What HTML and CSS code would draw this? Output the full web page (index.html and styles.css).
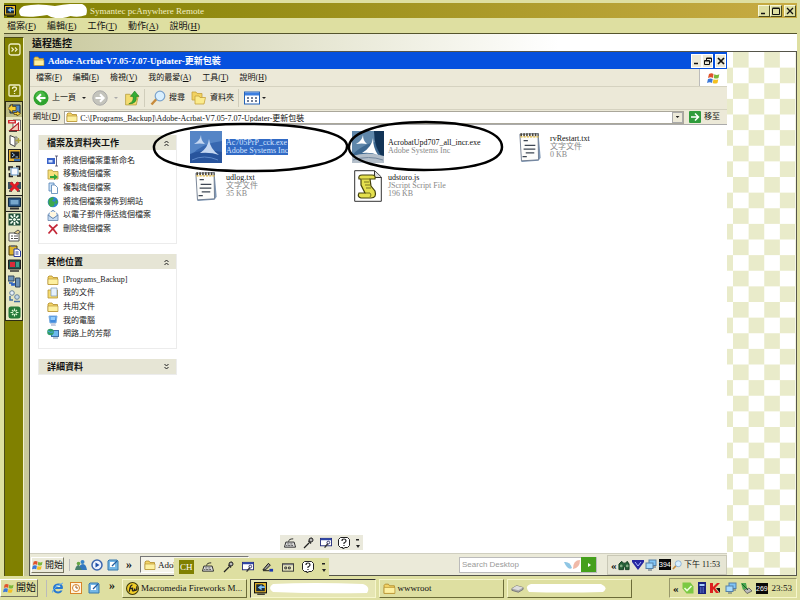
FILE: index.html
```html
<!DOCTYPE html>
<html lang="en">
<head>
<meta charset="utf-8">
<title>Symantec pcAnywhere Remote</title>
<link rel="stylesheet" href="styles.css">
</head>
<body>
<svg class="defs" aria-hidden="true">
  <symbol id="pca" viewBox="0 0 12 12"><rect x=".5" y=".5" width="11" height="9.500" fill="#f0bd28" stroke="#111"/><path d="M2 2h6l2 2v4.500H2z" fill="#1b2b3a"/><path d="M10 5.500H7V7.500L3.500 5 7 2.500v1.500h3z" fill="#7cc0f8"/><path d="M3 11.300h7" stroke="#111"/></symbol>
  <symbol id="folder" viewBox="0 0 12 12"><path d="M1 10.500V3l1-1h3l1 1.500h4.500v7z" fill="#f4d468" stroke="#b08a28" stroke-width=".8"/><path d="M1 10.500V5h10v5.500z" fill="#fdf0a0" stroke="#b08a28" stroke-width=".6"/></symbol>
  <symbol id="flag" viewBox="0 0 14 14"><path d="M2 3q2.500-1.500 4.500 0L6 7Q4 5.500 1 7z" fill="#e0532c"/><path d="M7.300 3.300q2.500 1.300 5 0L11.500 7q-2.500 1.200-4.700 0z" fill="#7cb83a"/><path d="M1 8q2.500-1.200 4.700 0L5 12Q3 10.500 0 12z" fill="#3c78d8"/><path d="M6.500 8.200q2.500 1.200 4.800 0L10.500 12q-2.500 1.200-4.800 0z" fill="#f4c020"/></symbol>
  <symbol id="back" viewBox="0 0 16 16"><circle cx="8" cy="8" r="7.500" fill="#2fa32f"/><circle cx="7.500" cy="6.500" r="5" fill="#5cc653" opacity=".6"/><path d="M12.500 8H4.500M8 4.200 4.300 8 8 11.800" fill="none" stroke="#fff" stroke-width="2"/></symbol>
  <symbol id="fwd" viewBox="0 0 16 16"><circle cx="8" cy="8" r="7.200" fill="#c4c4bc" stroke="#aaa"/><path d="M3.500 8h8M8 4.200 11.700 8 8 11.800" fill="none" stroke="#fff" stroke-width="2"/></symbol>
  <symbol id="up" viewBox="0 0 14 15"><path d="M1 14V4h4l1 1h7l-2 9z" fill="#f4dc70" stroke="#b29a3a" stroke-width=".7"/><path d="M4 13q5-2 4-7H5.500L9.500 1l4 5H11q1 7-7 7z" fill="#35ad35" stroke="#167316" stroke-width=".5"/></symbol>
  <symbol id="search" viewBox="0 0 16 16"><path d="m1.500 14.500 5-5.500" stroke="#c78b3c" stroke-width="2.500"/><circle cx="10" cy="6" r="4.800" fill="#d8efff" stroke="#7ba3cc" stroke-width="1.200"/></symbol>
  <symbol id="folders" viewBox="0 0 16 16"><path d="M1 10V2h4l1 1.500h5V10z" fill="#f2d260" stroke="#c5a13c" stroke-width=".8"/><path d="M4 14V6h4l1 1.500h5.500L13 14z" fill="#fbeb8c" stroke="#c5a13c" stroke-width=".8"/></symbol>
  <symbol id="views" viewBox="0 0 16 13"><rect x=".5" y=".5" width="15" height="12" fill="#fff" stroke="#2463b8"/><path d="M1 1h14v3H1z" fill="#3b7ee0"/><path d="M3 6.500h2m2 0h2m2 0h2M3 9.500h2m2 0h2m2 0h2" stroke="#457" stroke-width="1.500"/></symbol>
  <symbol id="go" viewBox="0 0 12 12"><rect width="12" height="12" rx="1" fill="#2f9c3c"/><path d="M2 6h7M6 2.500 9.500 6 6 9.500" fill="none" stroke="#fff" stroke-width="1.500"/></symbol>
  <symbol id="chev" viewBox="0 0 7 8"><path d="m1.500 4 2-2 2 2M1.500 7l2-2 2 2" fill="none" stroke="#222"/></symbol>
  <symbol id="rename" viewBox="0 0 12 12"><path d="M0 3h8v6H0z" fill="#3a63c8"/><path d="M1.500 5h4v2.500h-4z" fill="#cfe0ff"/><path d="M9.500 1v10M8 1h3M8 11h3" stroke="#446" stroke-width=".8"/></symbol>
  <symbol id="move" viewBox="0 0 12 12"><path d="M1 11V2h4l1 1.500h5V11z" fill="#f6e07c" stroke="#b59a38" stroke-width=".8"/><path d="M3 8h4V6l4 3-4 3v-2H3z" fill="#2fa53a"/></symbol>
  <symbol id="copy" viewBox="0 0 12 12"><path d="M2 1h5v8H2z" fill="#cfe4fa" stroke="#5282b4" stroke-width=".8"/><path d="M4.500 3H8l2.500 2.500v6h-6z" fill="#fff" stroke="#5282b4" stroke-width=".8"/></symbol>
  <symbol id="globe" viewBox="0 0 12 12"><circle cx="6" cy="6" r="5.300" fill="#3183d2"/><path d="M2 3q3-3 5-1L5 5l3 1-1 4-3 1Q0 8 2 3zM9 3l2 3-2 3-1-3z" fill="#3ca84b"/></symbol>
  <symbol id="mail" viewBox="0 0 12 12"><path d="M1 5.500 6 1l5 4.500v6H1z" fill="#c4dbf4" stroke="#6686ad" stroke-width=".8"/><path d="M3 3h6v4L6 9 3 7z" fill="#fff7df"/><path d="m1 6 5 3.500L11 6" fill="none" stroke="#6686ad"/></symbol>
  <symbol id="delete" viewBox="0 0 12 12"><path d="M2 2q4 3 8 9M10.500 1.500Q6 5 1.500 10.500" fill="none" stroke="#c42839" stroke-width="1.600"/></symbol>
  <symbol id="docs" viewBox="0 0 12 12"><path d="M1 11V3h9.500v8z" fill="#f6dc70" stroke="#b69536" stroke-width=".8"/><path d="M4 1h6v8H4z" fill="#e5f1fc" stroke="#7895b4" stroke-width=".7"/></symbol>
  <symbol id="pc" viewBox="0 0 12 12"><path d="M2 1h8l-1 7H3z" fill="#428cde" stroke="#7daee2"/><path d="M3.500 2h5L8 5H3.500z" fill="#92cbfb"/><path d="M4 8h4l1 3H4z" fill="#c5cde0"/></symbol>
  <symbol id="net" viewBox="0 0 12 12"><rect x="4.500" y="2.500" width="7" height="6" fill="#6cb9ee" stroke="#3d70a8"/><path d="M6 9h5v2H6z" fill="#b8c8d8"/><circle cx="3.500" cy="4" r="3.300" fill="#2f9b68"/><path d="M1 3q2 2 5 1" stroke="#46a9ef" fill="none"/></symbol>
  <symbol id="installer" viewBox="0 0 32 32"><path d="M0 0h32v32H0z" fill="#3767b0"/><path d="M0 0h32v10Q12 12 0 25z" fill="#5585c6"/><path d="M0 23Q14 17 32 21v11H0z" fill="#28549c"/><path d="M11 4q0 6 4 9-5-1-11 0 6-3 7-9zM19 8q1 10 10 16-8-3-19-2Q18 17 19 8z" fill="#c6d8f2"/><path d="M2 29q12-6 26 0" stroke="#5c87c8" fill="none"/></symbol>
  <symbol id="installer2" viewBox="0 0 32 32"><path d="M0 0h32v32H0z" fill="#3d6890"/><path d="M0 0h32v10Q14 10 0 24z" fill="#5f87aa"/><path d="M22 0h10v28Q22 18 22 0z" fill="#123457"/><path d="M0 25q16-5 32 0v7H0z" fill="#b4bfca"/><path d="M11 4q0 6 4 9-5-1-11 0 6-3 7-9zM21 7q0 10 5 17-7-3-16-2 10-6 11-15z" fill="#fff"/><path d="M1 29q16-5 30 0" stroke="#75899f" fill="none"/></symbol>
  <symbol id="text" viewBox="0 0 22 30"><path d="m2 3 17-1 2 23-2 3-16 1z" fill="#7e97b5"/><path d="m1.500 3 17-.5.500 24.500-16 1z" fill="#fdfdfb" stroke="#68758a" stroke-width=".8"/><path d="M2 3.500h17" stroke="#4b4538" stroke-width="3" stroke-dasharray="1.500 1.200"/><path d="M2 5.500h17" stroke="#e1b83c" stroke-width="1.300" stroke-dasharray="2 1"/><path d="M5 9h4M6 13.500h10M5 17h11M7 20.500h8M4 24h4" stroke="#3d4652" stroke-width="1.300"/></symbol>
  <symbol id="script" viewBox="0 0 28 32"><path d="M.700.700h20L27.300 7v24.300H.700z" fill="#fff" stroke="#333" stroke-width="1"/><path d="M20.500 1v6.500H27" fill="#ddd" stroke="#333"/><path d="M8 5h10q4 0 3 4h-5l1 7 4 5q2 7-4 7H7q-4-1-2-5h6L7 15V9H5q-1-4 3-4z" fill="#e4e04e" stroke="#44420c" stroke-width="1.200"/><path d="M8 9h8M10 12h5M11 15h5M12 18h5M11 23h5q2 2 0 4" stroke="#77731e" fill="none"/></symbol>
  <symbol id="keyb" viewBox="0 0 13 11"><path d="M2 4.500h9L12.500 10H.500z" fill="#eee" stroke="#222"/><path d="M3 6.500h7M2.500 8.300h8" stroke="#222" stroke-dasharray="1 .6"/><path d="M5 4q0-3 5-3" stroke="#222" fill="none"/></symbol>
  <symbol id="mic" viewBox="0 0 12 12"><path d="M10 1 7 4M6.500 4 9 6.500M7 6 2 11" stroke="#222" stroke-width="1.300"/><circle cx="9" cy="3" r="2" fill="#bbb" stroke="#222"/></symbol>
  <symbol id="tools" viewBox="0 0 13 12"><rect x=".5" y="1" width="12" height="8" fill="#fff" stroke="#252d7c"/><path d="M1 1h11v2H1z" fill="#2d45a7"/><path d="m5 11 4-5" stroke="#333" stroke-width="1.500"/><circle cx="9" cy="5.500" r="1.500" fill="#fff" stroke="#2b2b62"/></symbol>
  <symbol id="pen" viewBox="0 0 13 12"><path d="m1 9 6-7 2 2-5 5zM1 10h7" fill="#999" stroke="#111"/><path d="M8 8h4v3H8z" fill="#1c36b0"/></symbol>
  <symbol id="pad" viewBox="0 0 13 12"><rect x=".5" y="2.500" width="12" height="8" fill="#e8e8c0" stroke="#333"/><path d="M1 3h11v1H1z" fill="#667"/><path d="M3 6h2v2H3zm4 0h2v2H7z" fill="none" stroke="#333"/></symbol>
  <symbol id="help" viewBox="0 0 12 12"><path d="M2.500.500h7l2 2v6l-2 2H7L5 12v-1.500H2.500l-2-2v-6z" fill="#fff" stroke="#222"/><path d="M4 4q0-2 2-2t2 2q0 1-2 2v1m0 1v1" fill="none" stroke="#222" stroke-width="1.200"/></symbol>
  <symbol id="grip" viewBox="0 0 4 12"><path d="M0 2h3v1.500H0zM0 8h4L2 11z" fill="#222"/></symbol>
  <symbol id="ie" viewBox="0 0 12 12"><path d="M10 7H3q.5 2.500 3 2.500 1.500 0 2.500-1h2Q9 11.500 6 11.500 1 11 1 6.500T6 1.500t5 5z" fill="#2878d0"/><path d="M3.500 5h5q-.5-2-2.500-2T3.500 5z" fill="#e5f3d0"/><path d="M.500 10.500Q0 6 11 1" fill="none" stroke="#5faaf0"/></symbol>
  <symbol id="clock" viewBox="0 0 12 12"><rect x=".5" y=".5" width="11" height="11" fill="#fff4df" stroke="#d88328"/><circle cx="6" cy="6" r="3.500" fill="#fff" stroke="#d88328"/><path d="M6 3.500V6h2" stroke="#a55a12" fill="none"/></symbol>
  <symbol id="desktop" viewBox="0 0 12 12"><path d="M2 1h8l1 1v9H1V2z" fill="#74b7e6" stroke="#3778ac"/><path d="M3 3h5v5H3z" fill="#fff"/><path d="m5 7 5-5" stroke="#235b9b" stroke-width="1.200"/></symbol>
  <symbol id="msn" viewBox="0 0 12 12"><circle cx="7.500" cy="3" r="2" fill="#3583ca"/><path d="M4 11q0-6 4-6 3 0 4 6z" fill="#3277bd"/><circle cx="3.500" cy="4.500" r="1.800" fill="#67a744"/><path d="M0 11q1-5 4-5l3 5z" fill="#487f6d"/></symbol>
  <symbol id="media" viewBox="0 0 12 12"><circle cx="6" cy="6" r="5" fill="#eef4ff" stroke="#3c65ad" stroke-width="1.500"/><path d="m4.500 3.500 4 2.500-4 2.500z" fill="#1f4fa8"/></symbol>
  <symbol id="fw" viewBox="0 0 12 12"><circle cx="6" cy="6" r="5.500" fill="#f0ce27" stroke="#3d3908"/><path d="M3 9q1-7 3-6M3 6h3M6 5v3q2 1 2-2 0 3 2 1V4" fill="none" stroke="#222" stroke-width="1.200"/></symbol>
  <symbol id="drive" viewBox="0 0 14 12"><path d="M1 6 6 3l7 2v2L8 10 1 8z" fill="#aaa" stroke="#777"/><path d="m1 6 5-3 7 2-5 3z" fill="#ddd"/></symbol>
  <symbol id="binoc" viewBox="0 0 13 12"><path d="M1 5 4 2l2 2h2l2-2 2 3v6H8V8H6v3H1z" fill="#245f36" stroke="#123c21"/><circle cx="3.500" cy="7" r="1.500" fill="#80ac82"/><circle cx="10" cy="7" r="1.500" fill="#80ac82"/></symbol>
  <symbol id="vshield" viewBox="0 0 12 12"><path d="M0 1h12v2L6 11 0 3z" fill="#2525a0"/><path d="m3 3 3 4 3-4" fill="none" stroke="#a9b4ff"/></symbol>
  <symbol id="lan" viewBox="0 0 12 12"><rect x="4" y="1" width="7" height="5.500" fill="#7fc4f6" stroke="#5480a8"/><rect x="1" y="4" width="7" height="5.500" fill="#a5dafd" stroke="#5480a8"/><path d="M3 11h4M8 8h3" stroke="#567"/></symbol>
  <symbol id="skype" viewBox="0 0 12 12"><path d="M.500.500h8l3 4v7h-7l-4-5z" fill="#7cc943"/><path d="m2.500 6 2.500 2.500L9.500 4" fill="none" stroke="#eaffd8" stroke-width="1.600"/></symbol>
  <symbol id="phone" viewBox="0 0 8 12"><rect width="8" height="12" fill="#1a237d"/><path d="M1.500 2h5v2h-5z" fill="#a7d0ff"/><path d="M2 6h4M2 8h4M2 10h4" stroke="#7590e3" stroke-dasharray="1 .5"/></symbol>
  <symbol id="kav" viewBox="0 0 12 12"><path d="M1 1h3v4l4-4h3L6 6l4 5H7L4 7v4H1z" fill="#dc2020"/><path d="m7 6 4 5V6z" fill="#111"/></symbol>
  <symbol id="usb" viewBox="0 0 12 12"><path d="M1 1h5l1 5-4 2z" fill="#4aa64f"/><path d="m4 8 5-2 3 3-5 2.500z" fill="#bbb" stroke="#444" stroke-width=".7"/><path d="m2 2 6 6" stroke="#155c25"/></symbol>
  <symbol id="t1" viewBox="0 0 13 13"><path d="M2 2h10v8H2z" fill="#4f86c6" stroke="#182b42"/><path d="M0 5.500 4.500 1v2.500H8v4H4.500V10z" fill="#f6cf33" stroke="#4c3b0e" stroke-width=".7"/><path d="M6 9.500h3V8l3.500 2.500L9 13v-1.500H6z" fill="#f6cf33" stroke="#4c3b0e" stroke-width=".7"/></symbol>
  <symbol id="t2" viewBox="0 0 13 13"><path d="M5 1h7.500v10.500H5z" fill="#fff" stroke="#444" stroke-width=".8"/><path d="M0 1h8v3.500H0z" fill="#d0282f"/><path d="M1.500 2.700h5" stroke="#fff"/><path d="M2 11.500 10.500 4v7.500z" fill="#f4cdbd" stroke="#b6252b" stroke-width="1.200"/><path d="M1 12.300h8" stroke="#222"/></symbol>
  <symbol id="t3" viewBox="0 0 13 13"><path d="m2 1.500 5 2v9L2 10z" fill="#fff" stroke="#444"/><path d="M7 3h2v7H7" fill="none" stroke="#777"/><path d="M7.500 6.500H13M10.500 4v5" fill="none" stroke="#aca338" stroke-width="1.300"/></symbol>
  <symbol id="t4" viewBox="0 0 13 13"><rect x=".5" y=".5" width="12" height="12" fill="#e9b233" stroke="#222"/><path d="M2.500 2.500h9v7h-9z" fill="#171a22"/><path d="m4 4 2.500 2L4 8M7.500 8H10" fill="none" stroke="#9fc6e6"/><path d="M6 10h6v2H6z" fill="#3d71ad"/></symbol>
  <symbol id="t5" viewBox="0 0 13 13"><path d="M3 3h7v7H3z" fill="#f8fbff" stroke="#5d8fc4"/><path d="M1 5.500V2h4M8 1.500h3.500V5M12 7.500V11H9M5 11.500H1.500V8" fill="none" stroke="#222" stroke-width="1.600"/></symbol>
  <symbol id="t6" viewBox="0 0 13 13"><path d="M0 2h5v7H0zM8 2h5v7H8z" fill="#3c5361"/><path d="M1 11h3M9 11h3" stroke="#333" stroke-width="1.300"/><path d="m2.500 2.500 8 8M10.500 2.500l-8 8" stroke="#e01c24" stroke-width="3"/></symbol>
  <symbol id="t7" viewBox="0 0 13 13"><path d="M.500 1h12v8.500H.500z" fill="#2a5784" stroke="#102a42"/><path d="M2.500 3h8v4.500h-8z" fill="#77a8ce"/><path d="M2 11.500h9" stroke="#333" stroke-width="2"/></symbol>
  <symbol id="t8" viewBox="0 0 13 13"><path d="M.500.500h12v12H.500z" fill="#1f4f3a"/><path d="M6.500 1v3.500M6.500 8.500V12M1 6.500h3.500M8.500 6.500H12M2.500 2.500 5 5M8 8l2.500 2.500M10.500 2.500 8 5M5 8l-2.500 2.500" stroke="#f5fff2" stroke-width="1.700"/><circle cx="6.500" cy="6.500" r="2" fill="#e6f6e6" stroke="#1f4f3a"/></symbol>
  <symbol id="t9" viewBox="0 0 13 13"><path d="M1 4h10v8H1z" fill="#fff" stroke="#555"/><path d="M3 7h2M6 7h4M3 9.500h2M6 9.500h4" stroke="#555"/><path d="m6 4 4-3 2.500 2-3 2z" fill="#e2cb87" stroke="#555"/></symbol>
  <symbol id="t10" viewBox="0 0 13 13"><path d="M1 2h8v9H1z" fill="#e0b42a" stroke="#493c0f"/><path d="M3 1h4v2H3z" fill="#777"/><path d="M6 5h4l2.500 2v5.500H6z" fill="#fff" stroke="#2c3e9e"/><path d="M7.500 8h3M7.500 10h3" stroke="#2c3e9e"/></symbol>
  <symbol id="t11" viewBox="0 0 13 13"><path d="M.500 1h12v9H.500z" fill="#1d5550" stroke="#222"/><path d="M2 3h5v5H2z" fill="#d92c3a"/><path d="M8 3h3v5H8z" fill="#3f9b8a"/><path d="M2 12h9" stroke="#333" stroke-width="1.500"/></symbol>
  <symbol id="t12" viewBox="0 0 13 13"><path d="M0 1h6v5H0zM7.500 3H12v9H7.500z" fill="#6d93b8" stroke="#32475d"/><path d="M1 8h3v2h2V8" stroke="#245ec4" stroke-width="1.700" fill="none"/></symbol>
  <symbol id="t13" viewBox="0 0 13 13"><circle cx="4" cy="3" r="2.300" fill="#e8f0f7" stroke="#68829a"/><circle cx="9" cy="7" r="2.300" fill="#c2d8ea" stroke="#68829a"/><path d="M2 6v4h3M6 11.500h6" fill="none" stroke="#406fa3" stroke-width="1.500"/></symbol>
  <symbol id="t14" viewBox="0 0 13 13"><rect x=".5" y=".5" width="12" height="12" rx="2.500" fill="#257a39"/><path d="M6.500 2.500v8M2.500 6.500h8M4 4l5 5M9 4 4 9" stroke="#d8f5cf" stroke-width="1.200"/><circle cx="6.500" cy="6.500" r="1.500" fill="#257a39"/></symbol>
</svg>

<div class="app">
  <header class="titlebar">
    <svg class="i12"><use href="#pca"/></svg>
    <svg class="blot" viewBox="0 0 72 14" preserveAspectRatio="none"><path d="M3 12Q-2 6 6 2 20-1 38 2 55-1 66 0 73 3 70 11 62 14 54 12 40 17 30 11 12 14 3 12z" fill="#fff"/></svg>
    <h1>Symantec pcAnywhere Remote</h1>
    <div class="winbtns"><button aria-label="Minimize"><svg viewBox="0 0 8 8"><path d="M1 6.500h4" stroke="#111" stroke-width="1.500"/></svg></button><button aria-label="Maximize"><svg viewBox="0 0 8 8"><path d="M.500 1.500h7v6h-7zM.500 1h7" fill="none" stroke="#111"/></svg></button><button class="close" aria-label="Close"><svg viewBox="0 0 8 8"><path d="m1 1 6 6M7 1 1 7" stroke="#111" stroke-width="1.300"/></svg></button></div>
  </header>
  <nav class="menu"><button>檔案(<u>F</u>)</button><button>編輯(<u>E</u>)</button><button>工作(<u>T</u>)</button><button>動作(<u>A</u>)</button><button>說明(<u>H</u>)</button></nav>

  <div class="workspace">
    <aside class="rail">
      <div class="railtop">
        <button aria-label="Expand"><svg viewBox="0 0 13 13"><rect x="1" y="1" width="11" height="11" rx="2" fill="none" stroke="#f0f0c8" stroke-width="1.300"/><path d="m3.500 4.500 2 2-2 2M7 4.500l2 2-2 2" fill="none" stroke="#f0f0c8" stroke-width="1.200"/></svg></button>
        <button aria-label="Help"><svg viewBox="0 0 13 13"><rect x="1" y="1" width="11" height="11" rx="1" fill="none" stroke="#f0f0c8" stroke-width="1.300"/><path d="M4.500 5q0-2 2-2t2 2q0 1-2 2v1m0 1v1" fill="none" stroke="#f0f0c8" stroke-width="1.300"/></svg></button>
      </div>
      <div class="tools">
        <button class="hot" aria-label="Tool 1"><svg><use href="#t1"/></svg></button><button aria-label="Tool 2"><svg><use href="#t2"/></svg></button><button aria-label="Tool 3"><svg><use href="#t3"/></svg></button><button aria-label="Tool 4"><svg><use href="#t4"/></svg></button><button aria-label="Tool 5"><svg><use href="#t5"/></svg></button><button aria-label="Tool 6"><svg><use href="#t6"/></svg></button><button class="on" aria-label="Tool 7"><svg><use href="#t7"/></svg></button><button aria-label="Tool 8"><svg><use href="#t8"/></svg></button><button aria-label="Tool 9"><svg><use href="#t9"/></svg></button><button aria-label="Tool 10"><svg><use href="#t10"/></svg></button><button aria-label="Tool 11"><svg><use href="#t11"/></svg></button><button aria-label="Tool 12"><svg><use href="#t12"/></svg></button><button aria-label="Tool 13"><svg><use href="#t13"/></svg></button><button aria-label="Tool 14"><svg><use href="#t14"/></svg></button>
      </div>
    </aside>

    <main class="session">
      <h2>遠程遙控</h2>
      <div class="screen">
        <section class="remote">
          <header class="extitle"><svg class="i12"><use href="#folder"/></svg><h3>Adobe-Acrbat-V7.05-7.07-Updater-更新包裝</h3>
            <div class="exbtns"><button aria-label="Minimize"><svg viewBox="0 0 8 8"><path d="M1 6.500h4" stroke="#111" stroke-width="1.500"/></svg></button><button aria-label="Restore"><svg viewBox="0 0 8 8"><path d="M2.500 3V1h5v4h-2M.500 3.500h5v4h-5zM1 4h4M3 1.500h4" fill="none" stroke="#111"/></svg></button><button class="close" aria-label="Close"><svg viewBox="0 0 8 8"><path d="m1 1 6 6M7 1 1 7" stroke="#111" stroke-width="1.700"/></svg></button></div>
          </header>
          <nav class="exmenu"><button>檔案(<u>F</u>)</button><button>編輯(<u>E</u>)</button><button>檢視(<u>V</u>)</button><button>我的最愛(<u>A</u>)</button><button>工具(<u>T</u>)</button><button>說明(<u>H</u>)</button><span class="logo"><svg><use href="#flag"/></svg></span></nav>
          <div class="extools">
            <button><svg class="i16"><use href="#back"/></svg>上一頁</button><i class="drop"></i>
            <button aria-label="Forward"><svg class="i16"><use href="#fwd"/></svg></button><i class="drop dim"></i>
            <button aria-label="Up"><svg class="i16"><use href="#up"/></svg></button><i class="sep"></i>
            <button><svg class="i16"><use href="#search"/></svg>搜尋</button>
            <button class="fold"><svg class="i16"><use href="#folders"/></svg>資料夾</button><i class="sep"></i>
            <button aria-label="Views"><svg class="i16"><use href="#views"/></svg></button><i class="drop near"></i>
          </div>
          <form class="address"><label for="addr">網址(<u>D</u>)</label>
            <span class="addrbox"><svg class="i12"><use href="#folder"/></svg><input id="addr" value="C:\[Programs_Backup]\Adobe-Acrbat-V7.05-7.07-Updater-更新包裝"><button type="button" aria-label="Show addresses"><i class="drop"></i></button></span>
            <button class="gobtn" type="button"><svg class="i12"><use href="#go"/></svg>移至</button>
          </form>
          <div class="body">
            <aside class="panes">
              <section class="pane"><h4>檔案及資料夾工作<svg><use href="#chev"/></svg></h4>
                <ul class="six"><li><a href="#"><svg class="i12"><use href="#rename"/></svg>將這個檔案重新命名</a></li><li><a href="#"><svg class="i12"><use href="#move"/></svg>移動這個檔案</a></li><li><a href="#"><svg class="i12"><use href="#copy"/></svg>複製這個檔案</a></li><li><a href="#"><svg class="i12"><use href="#globe"/></svg>將這個檔案發佈到網站</a></li><li><a href="#"><svg class="i12"><use href="#mail"/></svg>以電子郵件傳送這個檔案</a></li><li><a href="#"><svg class="i12"><use href="#delete"/></svg>刪除這個檔案</a></li></ul></section>
              <section class="pane"><h4>其他位置<svg><use href="#chev"/></svg></h4>
                <ul class="five"><li><a href="#"><svg class="i12"><use href="#folder"/></svg>[Programs_Backup]</a></li><li><a href="#"><svg class="i12"><use href="#docs"/></svg>我的文件</a></li><li><a href="#"><svg class="i12"><use href="#folder"/></svg>共用文件</a></li><li><a href="#"><svg class="i12"><use href="#pc"/></svg>我的電腦</a></li><li><a href="#"><svg class="i12"><use href="#net"/></svg>網路上的芳鄰</a></li></ul></section>
              <section class="pane"><h4>詳細資料<svg class="down"><use href="#chev"/></svg></h4></section>
            </aside>
            <div class="files">
              <div class="file sel"><svg class="big"><use href="#installer"/></svg><p><b>Ac705PrP_cck.exe</b><span>Adobe Systems Inc</span></p></div>
              <div class="file"><svg class="big"><use href="#installer2"/></svg><p><b>AcrobatUpd707_all_incr.exe</b><span>Adobe Systems Inc</span></p></div>
              <div class="file"><svg class="big doc"><use href="#text"/></svg><p><b>rvRestart.txt</b><span>文字文件</span><span>0 KB</span></p></div>
              <div class="file"><svg class="big doc"><use href="#text"/></svg><p><b>udlog.txt</b><span>文字文件</span><span>35 KB</span></p></div>
              <div class="file"><svg class="big"><use href="#script"/></svg><p><b>udstoro.js</b><span>JScript Script File</span><span>196 KB</span></p></div>
            </div>
            <svg class="marks" viewBox="0 0 360 56" aria-hidden="true"><path d="M4 25C6 11 52 2 99 3c48 0 95 7 98 21 2 17-45 27-100 26C44 50 2 43 4 25z" fill="none" stroke="#000" stroke-width="2.500"/><path d="M199 25c2-14 31-24 77-24 39 0 76 8 76 25 0 15-32 23-78 23-40 0-77-8-75-24z" fill="none" stroke="#000" stroke-width="2.500"/></svg>
            <div class="ime inner"><button aria-label="Keyboard"><svg><use href="#keyb"/></svg></button><button aria-label="Microphone"><svg><use href="#mic"/></svg></button><button aria-label="Tools"><svg><use href="#tools"/></svg></button><button aria-label="Help"><svg><use href="#help"/></svg></button><button class="opt" aria-label="Options"><svg><use href="#grip"/></svg></button></div>
          </div>
          <footer class="rbar">
            <button class="start"><svg><use href="#flag"/></svg>開始</button>
            <div class="quick"><svg><use href="#msn"/></svg><svg><use href="#media"/></svg><svg><use href="#desktop"/></svg><span>»</span></div>
            <button class="rtask"><svg class="i12"><use href="#folder"/></svg>Adobe-Acrbat-V7.05-7.0...</button>
            <form class="find"><input aria-label="Search Desktop" placeholder="Search Desktop"><svg class="fly" viewBox="0 0 18 12"><path d="M1 3q6-1 8 6Q5 12 1 3z" fill="#8fc6e4"/><path d="M17 1q-7 0-7 9 7-1 7-9z" fill="#f0b9a8"/></svg><button type="button" aria-label="Search"><svg viewBox="0 0 8 8"><path d="m3 2 3 2-3 2z" fill="#fff"/></svg></button></form>
            <div class="rtray"><span>«</span><svg><use href="#binoc"/></svg><svg><use href="#vshield"/></svg><svg><use href="#lan"/></svg><b>394</b><svg><use href="#search"/></svg><time>下午 11:53</time></div>
          </footer>
        </section>
        <svg class="checks" aria-hidden="true"><defs><pattern id="chk" x="6" width="31.250" height="31.250" patternUnits="userSpaceOnUse"><path d="M0 0h31.250v31.250H0z" fill="#fff"/><path d="M0 0h15.625v15.625H0zM15.625 15.625H31.250V31.250H15.625z" fill="#e9ebca"/></pattern></defs><rect width="100%" height="100%" fill="url(#chk)"/></svg>
      </div>
    </main>
    <div class="ime outer"><b>CH</b><button aria-label="Keyboard"><svg><use href="#keyb"/></svg></button><button aria-label="Microphone"><svg><use href="#mic"/></svg></button><button aria-label="Tools"><svg><use href="#tools"/></svg></button><button aria-label="Pen"><svg><use href="#pen"/></svg></button><button aria-label="Pad"><svg><use href="#pad"/></svg></button><button aria-label="Help"><svg><use href="#help"/></svg></button><button class="opt" aria-label="Options"><svg><use href="#grip"/></svg></button></div>
  </div>

  <footer class="taskbar">
    <button class="start"><svg><use href="#flag"/></svg>開始</button>
    <div class="quick"><svg><use href="#ie"/></svg><svg><use href="#clock"/></svg><svg><use href="#desktop"/></svg><span>»</span></div>
    <div class="tasks">
      <button><svg><use href="#fw"/></svg>Macromedia Fireworks M...</button>
      <button class="on" aria-label="pcAnywhere"><svg><use href="#pca"/></svg><svg class="blot wide" viewBox="0 0 100 12" preserveAspectRatio="none"><path d="M4 10Q-2 6 4 2q40-2 90 0 8 3 4 9-50 1-94-1z" fill="#fff"/></svg></button>
      <button><svg><use href="#folder"/></svg>wwwroot</button>
      <button aria-label="Drive"><svg><use href="#drive"/></svg><svg class="blot mid" viewBox="0 0 80 10" preserveAspectRatio="none"><path d="M3 9Q-2 3 5 1h70q8 4 2 8-40 1-74 0z" fill="#fff"/></svg></button>
    </div>
    <div class="tray"><span>«</span><svg><use href="#skype"/></svg><svg><use href="#phone"/></svg><svg><use href="#kav"/></svg><svg><use href="#lan"/></svg><svg><use href="#usb"/></svg><b>269</b><time>23:53</time></div>
  </footer>
</div>
</body>
</html>
```
FILE: styles.css
```css
* { box-sizing: border-box; }
body { margin: 0; background: #dedfa1; color: #111; font: 9px/12px "Liberation Serif", "Noto Sans CJK TC", serif; }
h1, h2, h3, h4, p, ul { margin: 0; padding: 0; font-size: inherit; list-style: none; }
button, input { margin: 0; padding: 0; border: 0; background: none; color: inherit; font: inherit; }
button { display: flex; align-items: center; white-space: nowrap; }
button u { text-underline-offset: 1px; }
svg { display: block; flex: none; }
.defs { position: absolute; width: 0; height: 0; }
.i12 { width: 12px; height: 12px; }
.i16 { width: 16px; height: 16px; }

.app { min-height: 100vh; display: flex; flex-direction: column; }
.titlebar { height: 15px; margin: 3px 3px 0 4px; display: flex; align-items: center; background: linear-gradient(90deg, #808000, #948c14 30%, #c8ac44); color: #f1efc4; }
.titlebar h1 { font-weight: 400; flex: 1; margin-left: 2px; }
.blot { width: 70px; height: 14px; margin-left: 2px; }
.winbtns, .exbtns { display: flex; }
.winbtns button { width: 12px; height: 12px; background: #dedfa1; border: 1px solid; border-color: #f8f8d8 #4c4c20 #4c4c20 #f8f8d8; justify-content: center; }
.winbtns .close { margin: 0 1px 0 2px; }
.winbtns svg, .exbtns svg { width: 8px; height: 8px; }
.menu { height: 15px; padding-left: 7px; display: flex; gap: 11px; }

.workspace { flex: 1; display: flex; position: relative; margin: 0 3px 0 4px; border-top: 1px solid #55552c; background: linear-gradient(90deg, #c6c698, #fff 70%); }
.rail { width: 20px; margin-top: 3px; background: #808000; border-left: 1px solid #4c4c18; border-top: 1px solid #4c4c18; border-right: 1px solid #f2f2ca; }
.railtop { height: 63px; padding: 5px 0 4px; display: flex; flex-direction: column; justify-content: space-between; align-items: center; }
.railtop svg { width: 13px; height: 13px; }
.tools { height: 220px; display: flex; flex-direction: column; background: #e6e6c2; border: 1px solid #2c2c14; }
.tools button { flex: 1; justify-content: center; min-height: 0; }
.tools svg { width: 13px; height: 13px; }
.tools .hot { background: #bcbc84; }
.tools .on { background: #d0d0b0; border: 1px solid #222; border-width: 1px 0; }

.session { flex: 1; min-width: 0; margin-left: 5px; display: flex; flex-direction: column; }
.session h2 { height: 17px; padding: 4px 0 0 3px; font-size: 10px; }
.screen { flex: 1; display: grid; grid-template-columns: minmax(0, 1fr) 69px; border: 1px solid #55554a; }
.checks { width: 100%; height: 100%; }
.remote { display: flex; flex-direction: column; background: #fff; font-size: 8px; line-height: 8px; }
.extitle { height: 17px; padding: 0 1px 0 3px; display: flex; align-items: center; gap: 3px; background: #0550de; color: #fff; font-size: 9px; }
.extitle h3 { flex: 1; }
.exbtns button { width: 11px; height: 14px; background: #ece9d8; border: 1px solid #fff; justify-content: center; }
.exbtns .close { margin-left: 2px; }
.exmenu { height: 18px; padding-left: 6px; display: flex; align-items: center; gap: 11px; background: #ece9d8; border-bottom: 1px solid #d5d2c0; }
.logo { margin-left: auto; width: 28px; height: 17px; display: grid; place-items: center; background: #fff; border-left: 1px solid #bbb; }
.logo svg { width: 14px; height: 14px; }
.extools { height: 23px; padding-left: 3px; display: flex; align-items: center; background: #ece9d8; border-bottom: 1px solid #d5d2c0; }
.extools button { gap: 3px; }
.drop { width: 4px; height: 2px; margin: 0 6px; background: #222; clip-path: polygon(0 0, 100% 0, 50% 100%); flex: none; }
.dim { background: #aaa; }
.near { margin: 0 2px; }
.sep { width: 1px; height: 18px; margin: 0 5px 0 4px; background: #d0cdbb; }
.fold { margin-left: 6px; }
.address { height: 15px; padding-left: 3px; display: flex; align-items: center; gap: 4px; background: #ece9d8; border-bottom: 1px solid #aaa; }
.addrbox { flex: 1; display: flex; align-items: center; gap: 2px; height: 13px; padding-left: 1px; background: #fff; border: 1px solid #aaa79a; }
.addrbox input { flex: 1; min-width: 0; }
.addrbox button { width: 11px; height: 11px; background: #ece9d8; border: 1px solid #aaa; justify-content: center; }
.addrbox .drop { margin: 0; }
.gobtn { gap: 3px; padding-right: 7px; margin-left: 1px; }

.body { flex: 1; position: relative; display: flex; align-items: flex-start; }
.panes { width: 147px; padding: 10px 0 0 8px; display: grid; gap: 10px; }
.pane { border: 1px solid #ececec; border-top: 0; }
.pane h4 { height: 15px; padding: 0 6px 0 8px; display: flex; align-items: center; justify-content: space-between; font-size: 9px; background: #e6e5d5; }
.pane h4 svg { width: 7px; height: 8px; }
.pane .down { transform: rotate(180deg); }
.pane ul { padding: 4px 0 7px 8px; display: grid; grid-auto-rows: 1fr; }
.six { height: 93px; }
.five { height: 79px; }
.pane a { display: flex; align-items: center; gap: 4px; height: 100%; color: #222; text-decoration: none; white-space: nowrap; }
.files { flex: 1; display: grid; grid-template-columns: repeat(auto-fill, 162px); grid-auto-rows: 39px; padding: 2px 0 0 13px; }
.file { display: flex; align-items: center; gap: 4px; }
.big { width: 32px; height: 32px; }
.file b, .file span { display: block; font-weight: 400; color: #888; }
.file b { color: #111; }
.sel b, .sel span { background: #316ac5; color: #d5e5ff; }
.marks { position: absolute; left: 120px; top: -4px; width: 360px; height: 56px; overflow: visible; }

.ime { position: absolute; display: flex; align-items: center; }
.ime svg { width: 12px; height: 12px; }
.ime .opt svg { width: 4px; }
.inner { left: 250px; bottom: 3px; height: 15px; padding: 0 3px 0 4px; gap: 6px; background: #eae9dc; }
.outer { left: 170px; bottom: 0; height: 18px; padding: 0 3px 0 5px; gap: 8px; background: #dedfa1; }
.outer b { padding: 1px; background: #808000; color: #fff; font-weight: 400; }

.rbar { height: 22px; display: flex; align-items: center; background: #ebead9; border-top: 1px solid #d0cfc0; }
.start { gap: 1px; border: 1px solid; border-color: #fff #77755f #77755f #fff; }
.start svg { width: 12px; height: 12px; }
.rbar .start { height: 16px; width: 33px; margin-left: 1px; font-size: 9px; }
.quick { display: flex; align-items: center; gap: 4px; border-left: 1px solid #bbb; }
.quick svg { width: 12px; height: 12px; }
.rbar .quick { margin-left: 5px; padding-left: 5px; width: 71px; }
.quick span { align-self: flex-start; font: bold 12px/10px "Liberation Serif", serif; margin-left: 3px; }
.rtask { width: 109px; height: 17px; padding-left: 3px; gap: 2px; overflow: hidden; font-size: 9px; background: #f5f4ea; border: 1px solid; border-color: #777 #fff #fff #777; }
.find { margin-left: auto; display: flex; align-items: center; height: 16px; width: 138px; background: #fff; border: 1px solid #bbb; }
.find input { flex: 1; min-width: 0; padding-left: 2px; font-family: "Liberation Sans", sans-serif; }
.find input::placeholder { color: #999; }
.fly { width: 18px; height: 12px; }
.find button { width: 15px; height: 15px; background: #45a01c; justify-content: center; }
.find button svg { width: 8px; height: 8px; }
.rtray { width: 120px; height: 20px; margin-left: 10px; padding: 0 6px 0 3px; display: flex; align-items: center; justify-content: space-between; border: 1px solid #c9c8b6; background: #e6e5d4; }
.rtray svg { width: 12px; height: 12px; }
.rtray b, .tray b { width: 12px; background: #080808; color: #fff; font: 7px/11px "Liberation Sans", sans-serif; text-align: center; }
.rtray span, .tray span { font-weight: 700; font-size: 11px; }
.rtray svg:last-of-type { width: 10px; }

.taskbar { height: 24px; padding: 2px 3px 2px 0; display: flex; align-items: center; }
.taskbar .start { width: 38px; height: 18px; padding-left: 2px; font-size: 10px; }
.taskbar .quick { margin-left: 8px; padding-left: 5px; width: 76px; gap: 6px; height: 17px; }
.tasks { flex: 1; max-width: 510px; display: grid; grid-template-columns: repeat(4, 1fr); gap: 3px; }
.tasks button { height: 19px; padding-left: 3px; gap: 2px; overflow: hidden; border: 1px solid; border-color: #f6f6cc #6c6c38 #6c6c38 #f6f6cc; }
.tasks button > svg { width: 13px; height: 13px; }
.tasks .on { background: #e6e6b4; border-color: #333 #f6f6cc #f6f6cc #333; }
.tasks .blot.wide { width: 100px; height: 12px; margin: 0; }
.tasks .blot.mid { width: 80px; height: 10px; margin: 0; }
.tray { width: 128px; height: 20px; margin-left: auto; padding: 0 4px 0 3px; display: flex; align-items: center; justify-content: space-between; border: 1px solid; border-color: #98986a #f6f6cc #f6f6cc #98986a; }
.tray svg { width: 12px; height: 12px; }
.tray svg:nth-of-type(2) { width: 8px; }
```
